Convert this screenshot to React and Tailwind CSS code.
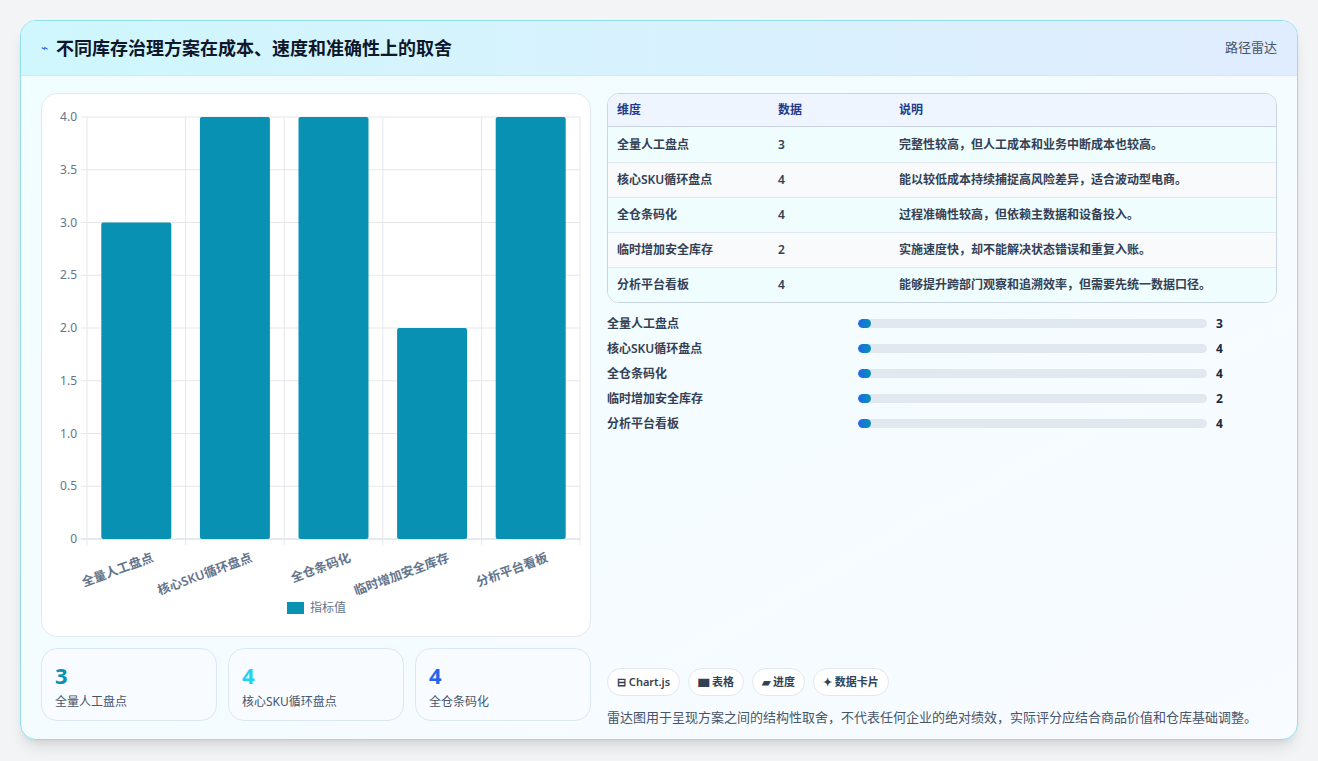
import React from "react";

const rows = [
  { name: "全量人工盘点", value: 3, note: "完整性较高，但人工成本和业务中断成本也较高。" },
  { name: "核心SKU循环盘点", value: 4, note: "能以较低成本持续捕捉高风险差异，适合波动型电商。" },
  { name: "全仓条码化", value: 4, note: "过程准确性较高，但依赖主数据和设备投入。" },
  { name: "临时增加安全库存", value: 2, note: "实施速度快，却不能解决状态错误和重复入账。" },
  { name: "分析平台看板", value: 4, note: "能够提升跨部门观察和追溯效率，但需要先统一数据口径。" },
];

function Chart() {
  const x0 = 45, x1 = 538, y0 = 445, y1 = 23;
  const cw = (x1 - x0) / 5;
  const unit = (y0 - y1) / 4;
  const ticks = [0, 0.5, 1, 1.5, 2, 2.5, 3, 3.5, 4];
  return (
    <svg width="550" height="543" className="block">
      {ticks.map((t) => {
        const y = y0 - t * unit;
        return (
          <g key={t}>
            <line x1={x0 - 6} x2={x1} y1={y} y2={y} stroke={t === 0 ? "#cbd5e1" : "#e5e7eb"} />
            <text x={x0 - 10} y={y + 4} textAnchor="end" fontSize="12" fill="#64748b">
              {t === 0 ? "0" : t.toFixed(1)}
            </text>
          </g>
        );
      })}
      {[0, 1, 2, 3, 4, 5].map((i) => (
        <line key={i} x1={x0 + i * cw} x2={x0 + i * cw} y1={y1} y2={y0 + 6} stroke="#e5e7eb" />
      ))}
      {rows.map((r, i) => {
        const cx = x0 + i * cw + cw / 2;
        const h = r.value * unit;
        return (
          <g key={r.name}>
            <rect x={cx - 35} y={y0 - h} width="70" height={h} rx="2" fill="#0891b2" />
            <text
              x={cx + 18}
              y={y0 + 22}
              textAnchor="end"
              fontSize="12.5"
              fontWeight="600"
              fill="#64748b"
              transform={`rotate(-20 ${cx + 18} ${y0 + 22})`}
            >
              {r.name}
            </text>
          </g>
        );
      })}
      <rect x="245" y="508" width="17" height="12" fill="#0891b2" />
      <text x="268" y="518" fontSize="12" fill="#64748b">指标值</text>
    </svg>
  );
}

export default function App() {
  return (
    <div
      className="min-h-screen bg-[#f3f4f6] px-5 pt-5 pb-5"
      style={{ fontFamily: '"Noto Sans", "Noto Sans CJK SC", sans-serif' }}
    >
      <div className="w-[1278px] h-[720px] rounded-2xl border border-[#8fe0ec] bg-gradient-to-br from-[#f0fdff] to-[#f8fbff] shadow-lg overflow-hidden flex flex-col">
        <div className="h-[55px] flex items-center justify-between px-5 bg-gradient-to-r from-[#cff7fd] to-[#e0ecff] border-b border-[#c7eef6]">
          <div className="flex items-center gap-2">
            <span className="text-[#2563eb] text-xs">⌁</span>
            <h1 className="text-[18px] font-bold text-[#0f172a]">不同库存治理方案在成本、速度和准确性上的取舍</h1>
          </div>
          <span className="text-[13px] text-[#475569]">路径雷达</span>
        </div>
        <div className="flex gap-4 px-5 pt-[17px]">
          <div className="w-[550px] flex flex-col gap-[11px]">
            <div className="h-[544px] rounded-2xl border border-[#e2e8f0] bg-white overflow-hidden">
              <Chart />
            </div>
            <div className="grid grid-cols-3 gap-[11px]">
              {[
                ["3", "全量人工盘点", "text-[#0891b2]"],
                ["4", "核心SKU循环盘点", "text-[#22d3ee]"],
                ["4", "全仓条码化", "text-[#2563eb]"],
              ].map(([v, l, c]) => (
                <div key={l} className="h-[73px] rounded-2xl border border-[#dbe7f5] bg-[#f8fbff] px-[13px] pt-[11px]">
                  <div className={`text-[22px] font-bold leading-[30px] ${c}`}>{v}</div>
                  <div className="text-[12px] text-[#475569] mt-[3px]">{l}</div>
                </div>
              ))}
            </div>
          </div>
          <div className="flex-1 flex flex-col">
            <div className="rounded-xl border border-[#cbd5e1] overflow-hidden bg-white">
              <div className="flex h-[33px] items-center bg-[#eef5ff] border-b border-[#cbd5e1] text-[12px] font-semibold text-[#1e3a8a]">
                <div className="w-[170px] pl-[9px]">维度</div>
                <div className="w-[121px]">数据</div>
                <div className="flex-1">说明</div>
              </div>
              {rows.map((r, i) => (
                <div
                  key={r.name}
                  className={`flex h-[35px] items-center text-[12px] font-semibold text-[#334155] ${i > 0 ? "border-t border-[#e2e8f0]" : ""} ${i % 2 === 0 ? "bg-[#f0fdff]" : "bg-[#f8fafc]"}`}
                >
                  <div className="w-[170px] pl-[9px]">{r.name}</div>
                  <div className="w-[121px]">{r.value}</div>
                  <div className="flex-1">{r.note}</div>
                </div>
              ))}
            </div>
            <div className="mt-[8px] flex flex-col">
              {rows.map((r) => (
                <div key={r.name} className="flex items-center h-[25px] text-[12px] font-semibold text-[#334155]">
                  <div className="w-[251px]">{r.name}</div>
                  <div className="w-[349px] h-[9px] rounded-full bg-[#e2e8f0] overflow-hidden">
                    <div className="w-[13px] h-full rounded-full bg-gradient-to-r from-[#2563eb] to-[#0891b2]" />
                  </div>
                  <div className="ml-[9px] font-bold text-[#1e293b]">{r.value}</div>
                </div>
              ))}
            </div>
            <div className="mt-[232px] flex gap-[8px]">
              {["⊟ Chart.js", "▆ 表格", "▰ 进度", "✦ 数据卡片"].map((t) => (
                <span key={t} className="h-[28px] px-[9px] flex items-center rounded-full border border-[#e2e8f0] bg-white text-[11px] font-semibold text-[#334155]">
                  {t}
                </span>
              ))}
            </div>
            <p className="mt-[12px] text-[13px] text-[#475569]">
              雷达图用于呈现方案之间的结构性取舍，不代表任何企业的绝对绩效，实际评分应结合商品价值和仓库基础调整。
            </p>
          </div>
        </div>
      </div>
    </div>
  );
}
